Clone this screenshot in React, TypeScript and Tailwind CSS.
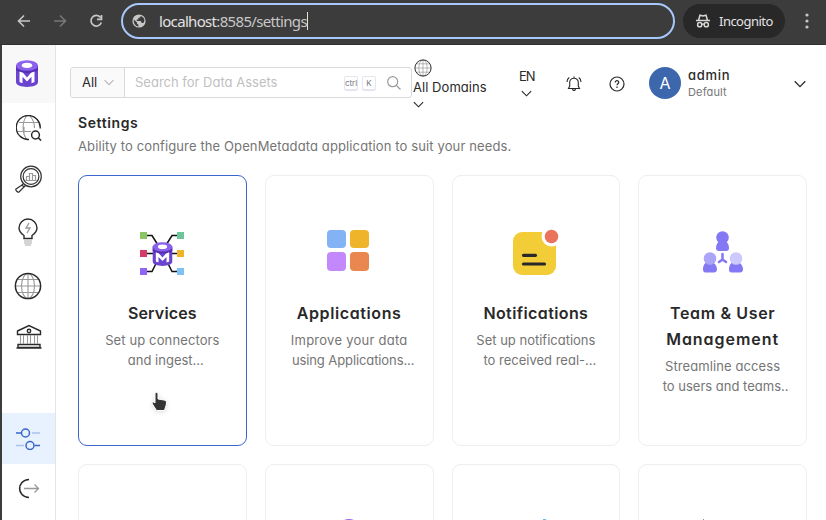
import type { ReactNode } from 'react';

function Cylinder({ className }: { className: string }) {
  return (
    <svg className={className} viewBox="0 0 22 27" fill="none">
      <path d="M0 5v17c0 6.500 22 6.500 22 0V5z" fill="#6a43cf" />
      <path d="M0 5v5c2 4 20 4 22 0V5z" fill="#5530b5" />
      <ellipse cx="11" cy="5.500" rx="11" ry="5.300" fill="#8a62ee" />
      <ellipse cx="11" cy="5.300" rx="5.200" ry="2.600" fill="#fff" />
      <path d="M3.500 11.500l3.500 1.300 4 4.700 4-4.700 3.500-1.300V22l-3 1.200v-6.400L11 21.500l-4.500-4.700v6.400l-3-1.200z" fill="#fff" />
    </svg>
  );
}

function Chevron({ className }: { className: string }) {
  return (
    <svg className={className} viewBox="0 0 12 8" fill="none" stroke="currentColor" strokeWidth="1.300">
      <path d="M.7 1.200 6 6.600l5.300-5.400" />
    </svg>
  );
}

function Globe({ className }: { className: string }) {
  return (
    <svg className={className} viewBox="0 0 28 28" fill="none" stroke="#999" strokeWidth="1.100">
      <path d="M14 1.500v25M1.500 14h25M3.500 7.500h21M3.500 20.500h21" />
      <ellipse cx="14" cy="14" rx="6.500" ry="12.500" />
      <circle cx="14" cy="14" r="12.600" stroke="#292929" strokeWidth="1.500" />
    </svg>
  );
}

function BrowserBar() {
  return (
    <div className="flex h-[45px] shrink-0 items-center border-b border-[#303030] bg-[#3c3c3c] pb-[3px] pl-[17px] text-[#c7c7c7]">
      <svg className="h-[14px] w-[14px]" viewBox="0 0 14 14" fill="none" stroke="#c7c7c7" strokeWidth="1.600"><path d="M13 7H2M7 1.500 1.500 7 7 12.500" /></svg>
      <svg className="ml-[22px] h-[14px] w-[14px]" viewBox="0 0 14 14" fill="none" stroke="#777" strokeWidth="1.600"><path d="M1 7h11M7 1.500 12.500 7 7 12.500" /></svg>
      <svg className="ml-[22px] h-[14px] w-[14px]" viewBox="0 0 14 14" fill="none" stroke="#c7c7c7" strokeWidth="1.700"><path d="M11.500 3.500A5.300 5.300 0 1 0 12.300 8.500M12.500 1v4.300H8" /></svg>
      <div className="ml-[18px] flex h-9 w-[554px] items-center rounded-full border-2 border-[#a8c7fa] pl-[9px]">
        <svg className="h-[14px] w-[14px]" viewBox="0 0 14 14"><circle cx="7" cy="7" r="6.600" fill="#c7c7c7" /><path d="M1.800 5.500 5 8.500v1.300l1.400 1v1.600C3.200 12 1.400 9.200 1.800 5.500zM8.500 1.900c0 1.500-.7 1.800-2.200 2v1.500l-1.500.2v1.300h4l.9 2.200h1.500c2.300-2.600 1.200-6.300-2.700-7.200z" fill="#3c3c3c" /></svg>
        <span className="ml-[13px] border-r border-[#e3e3e3] font-['Noto_Sans',sans-serif] text-[15px] leading-[18px] tracking-[-0.67px] text-[#c7c7c7]"><span className="text-[#e3e3e3]">localhost</span>:8585/settings</span>
      </div>
      <div className="ml-2 flex h-[34px] w-[102px] items-center rounded-full bg-[#282828] pl-[13px] text-[#e3e3e3]">
        <svg className="h-[14px] w-[14px]" viewBox="0 0 14 14" fill="none" stroke="#d7d7d7" strokeWidth="1.500"><path d="M0 6.500h14M2.600 6 4 1.200 7 2l3-.8L11.400 6" /><circle cx="3.700" cy="10.700" r="2.100" /><circle cx="10.300" cy="10.700" r="2.100" /><path d="M5.800 10.300c.8-.5 1.600-.5 2.400 0" /></svg>
        <span className="ml-[9px] font-['Noto_Sans',sans-serif] text-[13px] leading-4 tracking-[-0.52px]">Incognito</span>
      </div>
      <svg className="ml-[20px] h-4 w-1" viewBox="0 0 4 16" fill="#c7c7c7"><circle cx="2" cy="2" r="1.600" /><circle cx="2" cy="8" r="1.600" /><circle cx="2" cy="14" r="1.600" /></svg>
    </div>
  );
}

function Sidebar() {
  return (
    <div className="flex w-14 shrink-0 flex-col items-center border-r border-l-2 border-r-[#e4e4e4] border-l-[#3c3c3c] bg-white pr-px">
      <div className="-mr-px flex h-[58px] w-[53px] shrink-0 items-center justify-center bg-[#f8f8f8]"><Cylinder className="mr-1 mb-[2px] h-[27px] w-[22px]" /></div>
      <svg className="mt-[12px] ml-px h-[26px] w-[26px] shrink-0" viewBox="0 0 26 26" fill="none" stroke="#999" strokeWidth="1.100">
        <path d="M10.500 1C6 7 6 18 10.500 24M14 1c3.500 4 4.500 8 4.500 12M3 7.500h20M1 16.500h14M8 12v8" />
        <path d="M24.200 13.500A12 12 0 1 0 13 24.500" stroke="#292929" strokeWidth="1.400" />
        <circle cx="19.500" cy="20" r="3.900" stroke="#292929" strokeWidth="1.500" /><path d="m22.300 22.900 2.800 2.600" stroke="#292929" strokeWidth="1.500" />
      </svg>
      <svg className="mt-[24px] h-[28px] w-[28px] shrink-0" viewBox="0 0 28 28" fill="none" stroke="#333" strokeWidth="1.200">
        <circle cx="17" cy="11.500" r="10.300" /><circle cx="17" cy="11.500" r="7.900" /><path d="m9.500 18.500-2 2m4 0-2 2M8 20l2 2-5 5c-1 1-4-2-3-3z" /><path d="M12.500 15.500v-4h3v4m0 0v-7h3v7m0 0v-5h3v5zM11.500 15.500h11" stroke="#999" />
      </svg>
      <svg className="mt-[25px] h-[28px] w-[22px] shrink-0" viewBox="0 0 22 28" fill="none" stroke="#292929" strokeWidth="1.400">
        <path d="M7 20.500v-3C4.500 15.800 2 13.500 2 10a9 9 0 0 1 18 0c0 3.500-2.500 5.800-5 7.500v3z" /><path d="M7 23h8M7 25h8M8 27h6" stroke="#aaa" strokeWidth="1.200" /><path d="m12 5-3 5h4l-3 5" stroke="#999" strokeWidth="1.300" />
      </svg>
      <Globe className="mt-[26px] h-[28px] w-[28px] shrink-0" />
      <svg className="mt-[24px] ml-px h-[26px] w-[26px] shrink-0" viewBox="0 0 26 26" fill="none" stroke="#292929" strokeWidth="1.400">
        <path d="M1.500 7 13 1.500 24.500 7v3.500h-23zM2 20.500h22v3H2zM.5 24h25" /><circle cx="13" cy="7" r="1.700" /><path d="M4.500 11v9M7.500 11v9M11.500 11v9M14.500 11v9M18.500 11v9M21.500 11v9" stroke="#999" strokeWidth="1.100" />
      </svg>
      <div className="-mr-px mt-[63px] flex h-[51px] w-[53px] shrink-0 items-center justify-center bg-[#e8f2fe]">
        <svg className="mr-px h-[22px] w-[24px]" viewBox="0 0 24 22" fill="none" stroke="#3b65cd" strokeWidth="1.500"><path d="M0 5h5.500M18.500 17.500H24" /><circle cx="9.500" cy="5" r="4" /><circle cx="14" cy="17.500" r="4" /><path d="M16 5h8M0 17.500h8" stroke="#a9c0f0" /></svg>
      </div>
      <svg className="mt-[14px] ml-[2px] h-[21px] w-[22px] shrink-0" viewBox="0 0 22 21" fill="none" stroke="#292929" strokeWidth="1.600"><path d="M11 1.500C-1.500 2-1.500 19 11 19.500" /><path d="M6 10.500h14.500M16.500 6.500l4 4-4 4" stroke="#999" strokeWidth="1.300" /></svg>
    </div>
  );
}

function Header() {
  return (
    <div className="flex h-[65px] shrink-0 pl-[14px] text-[13px] text-[#292929]">
      <div className="mt-[22px] flex h-[31px] w-[342px] shrink-0 items-center overflow-hidden rounded-[3px] border border-[#d9d9d9]">
        <div className="flex h-full w-[54px] items-center border-r border-[#d9d9d9] bg-[#fafafa] pl-[11px]">All<Chevron className="ml-[7px] h-[7px] w-[10px] text-[#b5b5b5]" /></div>
        <span className="ml-[10px] w-[209px] whitespace-nowrap text-[#bfbfbf]">Search for Data Assets</span>
        <span className="flex h-[14px] w-[14px] items-center justify-center rounded-[2px] border border-[#e5e5ee] text-[8px] text-[#76767d] shadow-[0_1px_0_#e5e5ee]">ctrl</span>
        <span className="ml-1 flex h-[14px] w-[14px] items-center justify-center rounded-[2px] border border-[#e5e5ee] text-[8px] text-[#76767d] shadow-[0_1px_0_#e5e5ee]">K</span>
        <svg className="ml-[11px] h-[14px] w-[14px]" viewBox="0 0 14 14" fill="none" stroke="#999" strokeWidth="1.200"><circle cx="5.700" cy="5.700" r="5" /><path d="m9.300 9.300 4.200 4.200" /></svg>
      </div>
      <div className="mt-[14px] flex w-[107px] shrink-0 flex-col pl-px">
        <Globe className="ml-px h-[18px] w-[18px]" />
        <span className="whitespace-nowrap leading-5 tracking-[0.05px]">All Domains</span>
        <Chevron className="mt-[4px] h-[7px] w-[11px]" />
      </div>
      <div className="mt-[21px] flex w-[47px] shrink-0 flex-col">
        <span className="leading-5 tracking-[-1px]">EN</span><Chevron className="ml-[2px] mt-[4px] h-[7px] w-[11px]" />
      </div>
      <svg className="mt-[31px] h-4 w-4 shrink-0" viewBox="0 0 16 16" fill="none" stroke="#292929" strokeWidth="1.100"><path d="M2.500 12.500h11L12.300 10V6.500a4.300 4.300 0 0 0-8.600 0V10zM6.500 13c.5 2 2.500 2 3 0M8 2V.5M3.200 1.500C1.800 2.500 1 4.200 1 6M12.800 1.500C14.200 2.500 15 4.200 15 6" /></svg>
      <svg className="ml-[27px] mt-[31px] h-4 w-4 shrink-0" viewBox="0 0 16 16" fill="none" stroke="#292929" strokeWidth="1.200"><circle cx="8" cy="8" r="7" /><path d="M6.200 6.500C6.200 4 9.900 4.200 9.700 6.400 9.600 7.800 8 7.700 8 9.300M8 10.500V12" /></svg>
      <div className="ml-[24px] mt-[22px] flex h-8 w-8 shrink-0 items-center justify-center rounded-full bg-[#3d67ad] text-[16px] text-white">A</div>
      <div className="ml-[7px] mt-[21px] flex w-[106px] flex-col">
        <span className="text-[13px] leading-[18px] font-medium tracking-[0.7px]">admin</span><span className="text-[11px] leading-4 tracking-[0.15px] text-[#757575]">Default</span>
      </div>
      <Chevron className="mt-[35px] h-2 w-3" />
    </div>
  );
}

function ServicesIcon() {
  return (
    <div className="grid h-11 w-11 place-items-center">
      <svg className="col-start-1 row-start-1 h-11 w-11" viewBox="0 0 44 44" fill="none" stroke="#111" strokeWidth="1.500">
        <path d="M7 4.500h5l5 8M37 4.500h-5l-5 8M7 22.500h7M30 22.500h7M7 40.500h5l4-8M37 40.500h-5l-4-8" />
        <g stroke="none"><path d="M0 1h7v7H0z" fill="#8bc564" /><path d="M37 1h7v7h-7z" fill="#6dc59c" /><path d="M0 19h7v7H0z" fill="#d53b68" /><path d="M37 19h7v7h-7z" fill="#efb42a" /><path d="M0 37h7v7H0z" fill="#9266f4" /><path d="M37 37h7v7h-7z" fill="#7ec3f3" /></g>
      </svg>
      <Cylinder className="col-start-1 row-start-1 mt-[3px] h-[24px] w-[21px]" />
    </div>
  );
}

function ApplicationsIcon() {
  return <div className="grid h-[41px] w-[42px] grid-cols-2 gap-[4px]"><i className="rounded-[4px] bg-[#84b3f5]" /><i className="rounded-[4px] bg-[#efb42a]" /><i className="rounded-[4px] bg-[#c388fb]" /><i className="rounded-[4px] bg-[#ea864f]" /></div>;
}

function NotificationsIcon() {
  return <svg className="h-[46px] w-[46px]" viewBox="0 0 46 46"><rect x="0" y="3" width="43" height="43" rx="9" fill="#f3cd38" /><circle cx="38.500" cy="7.500" r="10" fill="#fff" /><circle cx="38.500" cy="7.500" r="6.800" fill="#e9735b" /><path d="M10.500 26.300h12M10.500 35h21" stroke="#292929" strokeWidth="3.200" strokeLinecap="round" /></svg>;
}

function TeamIcon() {
  return (
    <svg className="h-[42px] w-[42px]" viewBox="0 0 42 42" fill="#8478f4">
      <path d="M14 17c0-3 1.500-6 4-7h5c2.500 1 4 4 4 7 0 2-1 3-3 3h-7c-2 0-3-1-3-3z" /><circle cx="20.500" cy="6.500" r="6.300" />
      <path d="M1 38c0-3 1.500-6 4-7h5c2.500 1 5 4 5 7 0 2-1 3.500-3 3.500H3.500C1.500 41.500 1 40 1 38zM27 38c0-3 1.500-6 4-7h5c2.500 1 5 4 5 7 0 2-1 3.500-3 3.500h-8.500c-2 0-2.500-1.500-2.500-3.500z" />
      <circle cx="8" cy="27.500" r="6.300" fill="#aaa5f8" /><circle cx="34" cy="27.500" r="6.300" fill="#ccc9fc" /><path d="M20.500 23v5.500l-3.500 2.500M20.500 28.500l3.500 2.500" fill="none" stroke="#8478f4" strokeWidth="2.500" strokeLinecap="round" />
    </svg>
  );
}

function Card({ icon, title, desc, active = false }: { icon: ReactNode; title: ReactNode; desc: ReactNode; active?: boolean }) {
  return (
    <div className={`flex h-[271px] flex-col items-center rounded-[9px] border bg-white pt-[52px] text-center ${active ? 'border-[#3b65cd]' : 'border-[#eeeeee]'}`}>
      <div className="flex h-[48px] items-center justify-center">{icon}</div>
      <div className="mt-[24px] whitespace-nowrap text-[16px] leading-[26px] font-semibold text-[#292929]">{title}</div>
      <div className="mt-[5px] whitespace-nowrap text-[13px] leading-[19.5px] text-[#757575]">{desc}</div>
    </div>
  );
}

function NextCard({ children }: { children?: ReactNode }) {
  return <div className="flex h-[271px] flex-col items-center rounded-[9px] border border-[#eeeeee] bg-white pt-[54px]">{children}</div>;
}

export default function App() {
  return (
    <div className="relative flex h-[520px] w-[826px] flex-col overflow-hidden bg-white font-['Inter',sans-serif] [font-feature-settings:'cv11']">
      <BrowserBar />
      <div className="flex min-h-0 flex-1">
        <Sidebar />
        <div className="flex min-w-0 flex-1 flex-col">
          <Header />
          <div className="pl-[22px]">
            <h1 className="mt-[3px] text-[14px] leading-5 font-semibold tracking-[0.6px] text-[#292929]">Settings</h1>
            <p className="mt-[3px] whitespace-nowrap text-[13px] leading-5 tracking-[0.12px] text-[#757575]">Ability to configure the OpenMetadata application to suit your needs.</p>
            <div className="mt-[19px] grid w-[729px] grid-cols-4 gap-[18px]">
              <Card active icon={<div className="mt-px"><ServicesIcon /></div>} title={<span className="tracking-[0.15px]">Services</span>} desc={<><span className="tracking-[0.12px]">Set up connectors</span><br /><span className="pl-[7px]">and ingest...</span></>} />
              <Card icon={<div className="-mt-[4px] mr-[2px]"><ApplicationsIcon /></div>} title={<span className="tracking-[0.6px]">Applications</span>} desc={<><span className="tracking-[0.25px]">Improve your data</span><br /><span className="pl-[8px] tracking-[-0.1px]">using Applications...</span></>} />
              <Card icon={<NotificationsIcon />} title={<span className="tracking-[0.4px]">Notifications</span>} desc={<>Set up notifications<br /><span className="pl-[8px]">to received real-...</span></>} />
              <Card icon={<TeamIcon />} title={<><span className="tracking-[0.65px]">Team &amp; User</span><br /><span className="tracking-[0.95px]">Management</span></>} desc={<><span className="tracking-[0.1px]">Streamline access</span><br /><span className="pl-[6px]">to users and teams..</span></>} />
              <NextCard />
              <NextCard><div className="h-6 w-6 rounded-full bg-[#9266f4]" /></NextCard>
              <NextCard><div className="ml-[17px] h-6 w-[3px] bg-[#61bff0]" /></NextCard>
              <NextCard><div className="mr-[38px] h-6 w-px bg-[#8a8f9b]" /></NextCard>
            </div>
          </div>
        </div>
      </div>
      <svg className="absolute top-[392px] left-[151px] h-5 w-4 drop-shadow-sm" viewBox="0 0 16 20"><path d="M4 2c0-2 3-2 3 0v5l6 1c2 .4 2.500 1 2.500 3-.2 3-1.500 5-2 7.500h-8L2 13c-2-3 0-4 2-2z" fill="#333" stroke="#fff" strokeWidth="1" /></svg>
    </div>
  );
}
